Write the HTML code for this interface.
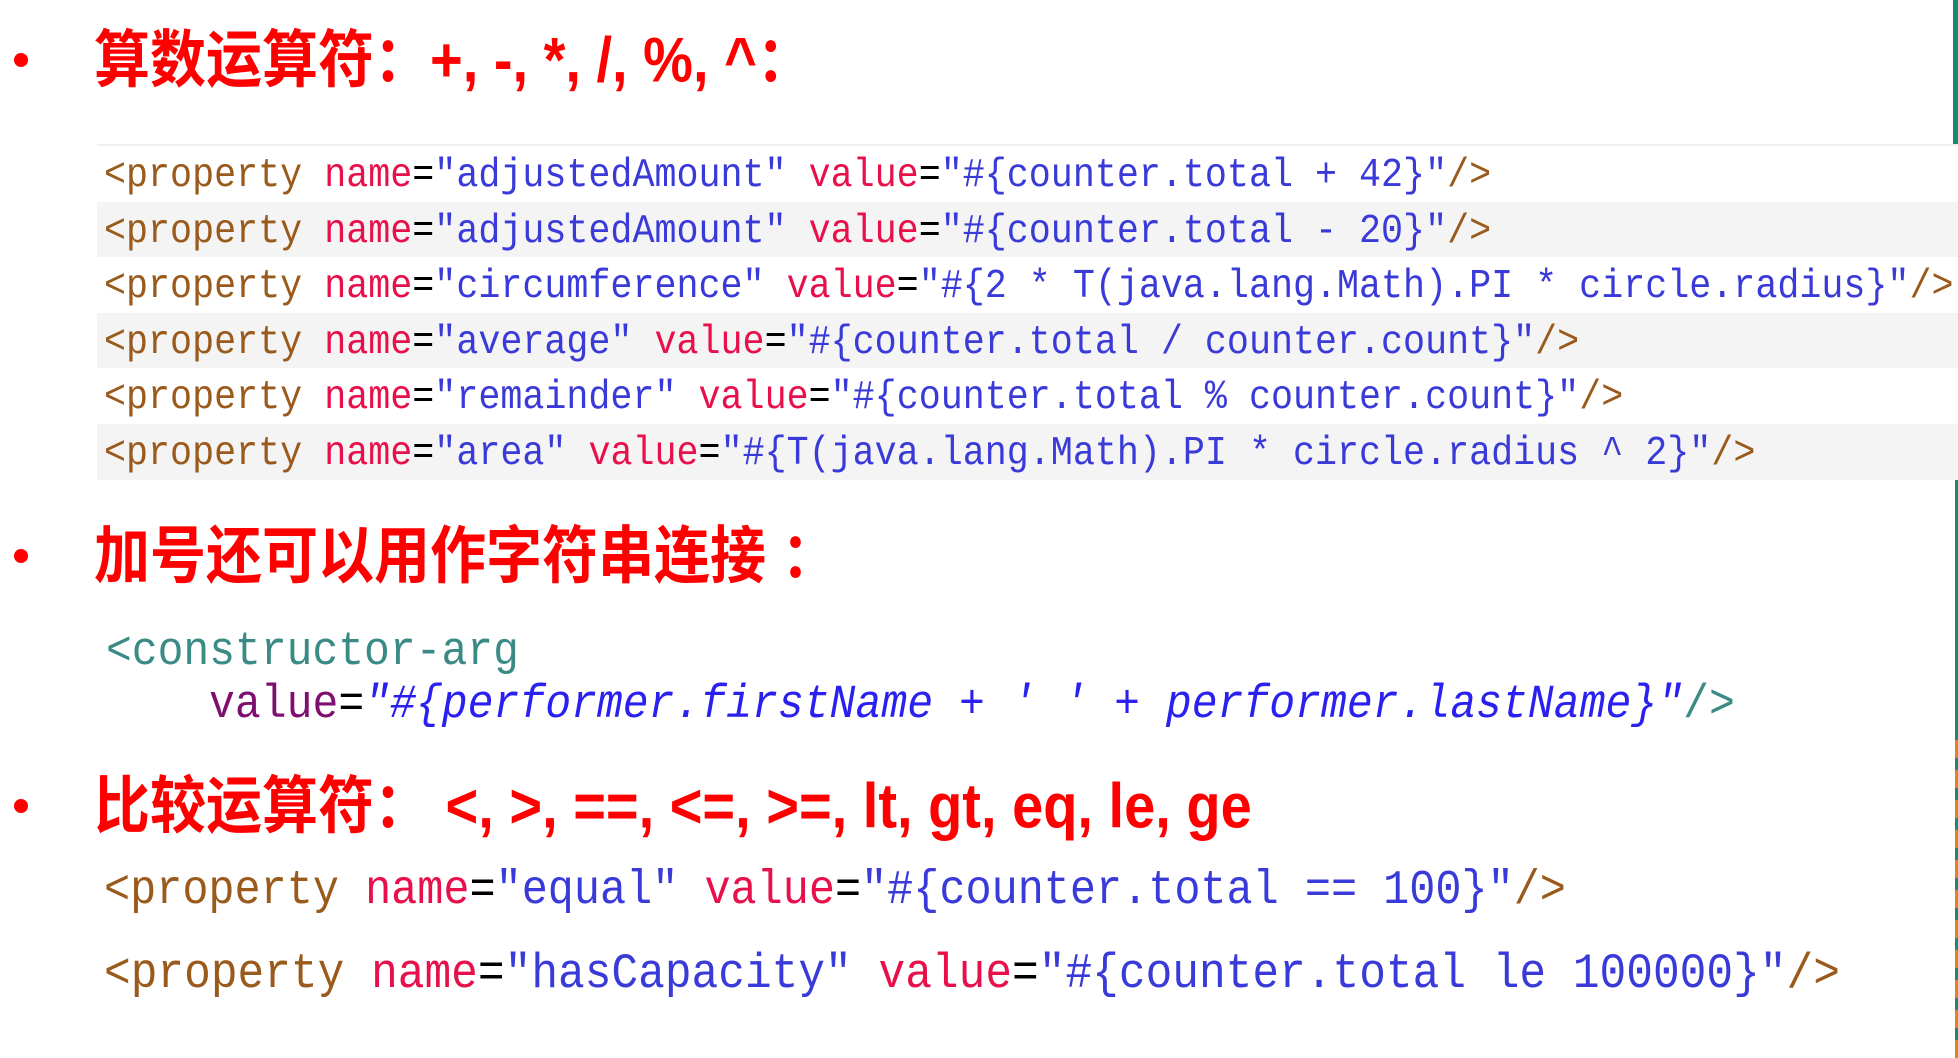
<!DOCTYPE html>
<html><head><meta charset="utf-8"><style>
html,body{margin:0;padding:0;background:#fff;width:1958px;height:1058px;overflow:hidden;position:relative}
.h{position:absolute;left:94px;color:#f00;font-family:"Liberation Sans","Noto Sans CJK SC",sans-serif;font-weight:bold;font-size:56px;line-height:70px;white-space:nowrap;transform:scaleY(1.12);transform-origin:left center}
.b{position:absolute;left:14px;width:14px;height:14px;border-radius:50%;background:#f00}
.code{position:absolute;left:97px;top:144px;width:1861px;height:334px;border-top:2px solid #f0f0f0}
.row{height:55.6px;line-height:55.6px;padding-left:7px;font-family:"Liberation Mono",monospace;font-size:36.7px;white-space:nowrap}
.row > div{display:inline-block;transform:translateY(3px) scaleY(1.12);transform-origin:left center}
.row:nth-child(even){background:#f4f4f4}
.ln{position:absolute;font-family:"Liberation Mono",monospace;white-space:nowrap;transform:scaleY(1.1);transform-origin:left center}
.t{color:#9a5a1c}.a{color:#e8104a}.v{color:#3a3ad8}.k{color:#3a8a86}.p{color:#7f0f6f}.s{color:#2a20f0;font-style:italic}
</style></head><body>
<div style="position:absolute;right:0;top:0;width:5px;height:144px;background:#1a8a6e"></div>
<div style="position:absolute;right:0;top:480px;width:3px;height:260px;background:#1a8a6e"></div>
<div style="position:absolute;right:0;top:740px;width:3px;height:318px;background:repeating-linear-gradient(#e08020 0 18px,#1a8a6e 18px 30px)"></div>

<div class="b" style="top:53px"></div>
<div class="h" style="top:25px">算数运算符：+, -, *, /, %, ^：</div>

<div class="code">
<div class="row"><div><span class="t">&lt;property</span> <span class="a">name</span>=<span class="v">"adjustedAmount"</span> <span class="a">value</span>=<span class="v">"#{counter.total + 42}"</span><span class="t">/&gt;</span></div></div>
<div class="row"><div><span class="t">&lt;property</span> <span class="a">name</span>=<span class="v">"adjustedAmount"</span> <span class="a">value</span>=<span class="v">"#{counter.total - 20}"</span><span class="t">/&gt;</span></div></div>
<div class="row"><div><span class="t">&lt;property</span> <span class="a">name</span>=<span class="v">"circumference"</span> <span class="a">value</span>=<span class="v">"#{2 * T(java.lang.Math).PI * circle.radius}"</span><span class="t">/&gt;</span></div></div>
<div class="row"><div><span class="t">&lt;property</span> <span class="a">name</span>=<span class="v">"average"</span> <span class="a">value</span>=<span class="v">"#{counter.total / counter.count}"</span><span class="t">/&gt;</span></div></div>
<div class="row"><div><span class="t">&lt;property</span> <span class="a">name</span>=<span class="v">"remainder"</span> <span class="a">value</span>=<span class="v">"#{counter.total % counter.count}"</span><span class="t">/&gt;</span></div></div>
<div class="row"><div><span class="t">&lt;property</span> <span class="a">name</span>=<span class="v">"area"</span> <span class="a">value</span>=<span class="v">"#{T(java.lang.Math).PI * circle.radius ^ 2}"</span><span class="t">/&gt;</span></div></div>
</div>

<div class="b" style="top:549px"></div>
<div class="h" style="top:521px">加号还可以用作字符串连接 ：</div>

<div class="ln k" style="left:106px;top:626px;font-size:43px;line-height:52px">&lt;constructor-arg</div>
<div class="ln" style="left:209px;top:679px;font-size:43.1px;line-height:52px"><span class="p">value</span>=<span class="s">"#{performer.firstName + ' ' + performer.lastName}"</span><span class="k">/&gt;</span></div>

<div class="b" style="top:799px"></div>
<div class="h" style="top:771px">比较运算符： &lt;, &gt;, ==, &lt;=, &gt;=, lt, gt, eq, le, ge</div>

<div class="ln" style="left:104px;top:866px;font-size:43.5px;line-height:52px"><span class="t">&lt;property</span> <span class="a">name</span>=<span class="v">"equal"</span> <span class="a">value</span>=<span class="v">"#{counter.total == 100}"</span><span class="t">/&gt;</span></div>
<div class="ln" style="left:104px;top:949px;font-size:44.5px;line-height:52px"><span class="t">&lt;property</span> <span class="a">name</span>=<span class="v">"hasCapacity"</span> <span class="a">value</span>=<span class="v">"#{counter.total le 100000}"</span><span class="t">/&gt;</span></div>
</body></html>
